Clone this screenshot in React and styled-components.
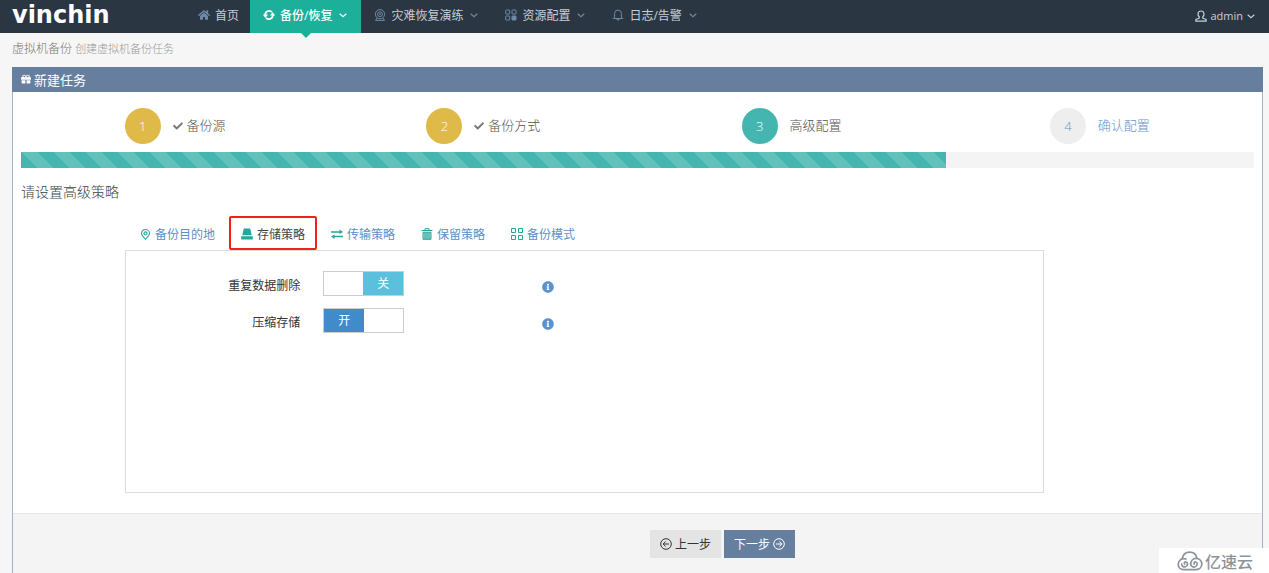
import React from "react";
import styled, { createGlobalStyle, css } from "styled-components";
import { FaHome, FaGift, FaCheck, FaInfoCircle } from "react-icons/fa";

const GlobalStyle = createGlobalStyle`
  * {
    box-sizing: border-box;
  }
  body {
    margin: 0;
    background: #f6f6f6;
    color: #333;
    font-family: "Open Sans", "Noto Sans CJK SC", sans-serif;
    font-size: 12px;
  }
  button {
    font: inherit;
    cursor: pointer;
  }
`;

const Page = styled.div`
  display: flex;
  flex-direction: column;
  min-height: 100vh;
`;

const TopBar = styled.header`
  display: flex;
  height: 33px;
  background: #2b3643;
`;

const Logo = styled.a`
  width: 185px;
  padding-left: 12px;
  color: #fff;
  font-family: "DejaVu Sans", sans-serif;
  font-size: 24px;
  font-weight: 700;
  line-height: 30px;
  text-decoration: none;
`;

const Nav = styled.nav`
  display: flex;
  flex: 1;
`;

const NavLink = styled.a`
  position: relative;
  display: flex;
  align-items: center;
  gap: 5px;
  height: 33px;
  padding: 0 ${(props) => (props.$menu ? "13px" : "11px")} 3px 13px;
  color: #c6cfda;
  text-decoration: none;
  white-space: nowrap;

  > svg {
    color: #7089a8;
  }
  > svg + svg,
  > span + svg {
    margin-left: 1px;
  }
  ${(props) =>
    props.$active &&
    css`
      background: #1caf9a;
      color: #fff;
      font-weight: 500;
      > svg {
        color: #fff;
      }
      &::after {
        content: "";
        position: absolute;
        left: 50%;
        bottom: -5px;
        margin-left: -6px;
        border: 6px solid transparent;
        border-top-color: #1caf9a;
        border-bottom: 0;
      }
    `}
`;

const UserMenu = styled.button`
  display: flex;
  align-items: center;
  gap: 3px;
  height: 33px;
  padding: 0 13px 2px;
  border: 0;
  background: none;
  color: #c6cfda;
  font-size: 11px;
`;

const PageTitle = styled.h1`
  margin: 0;
  padding: 6px 12px 8px;
  color: #777;
  font-size: 12px;
  font-weight: 300;
  line-height: 20px;

  small {
    color: #999;
    font-size: 11px;
  }
`;

const Portlet = styled.main`
  display: flex;
  flex: 1;
  flex-direction: column;
  margin: 0 6px 0 12px;
  border: 1px solid #a3b3ca;
  border-top: 0;
  border-bottom: 0;
  background: #fff;
`;

const PortletTitle = styled.h2`
  display: flex;
  align-items: center;
  gap: 3px;
  height: 25px;
  margin: 0 -1px;
  padding: 0 9px 1px;
  background: #677f9f;
  color: #fff;
  font-size: 13px;
  font-weight: 400;
`;

const Body = styled.div`
  padding: 16px 8px 20px;
`;

const Steps = styled.ol`
  display: flex;
  margin: 0;
  padding: 0;
  list-style: none;
`;

const Step = styled.li`
  display: flex;
  flex: 1;
  align-items: center;
  justify-content: center;
  gap: 12px;
  color: ${(props) => (props.$state === "todo" ? "#6a93c9" : "#555")};
  font-size: 13px;
  font-weight: 300;
`;

const stepColors = { done: "#dfba49", active: "#45b6af", todo: "#eee" };

const StepNumber = styled.span`
  width: 36px;
  height: 36px;
  border-radius: 50%;
  background: ${(props) => stepColors[props.$state]};
  color: ${(props) => (props.$state === "todo" ? "#6a93c9" : "#fff")};
  line-height: 36px;
  text-align: center;
`;

const StepLabel = styled.span`
  display: flex;
  align-items: center;
  gap: 4px;
  padding-bottom: 3px;

  svg {
    margin-top: 3px;
    color: #777;
  }
`;

const Progress = styled.div`
  height: 16px;
  margin-top: 8px;
  background: #f4f4f4;
`;

const ProgressBar = styled.div`
  height: 16px;
  background: #45b6af
    linear-gradient(
      45deg,
      rgba(255, 255, 255, 0.15) 25%,
      transparent 25%,
      transparent 50%,
      rgba(255, 255, 255, 0.15) 50%,
      rgba(255, 255, 255, 0.15) 75%,
      transparent 75%
    );
  background-size: 32px 32px;
`;

const SectionTitle = styled.h3`
  margin: 14px 0;
  color: #444;
  font-size: 14px;
  font-weight: 300;
  line-height: 20px;
`;

const Tabs = styled.div`
  display: flex;
  gap: 2px;
  width: 75%;
  margin-left: 104px;
  padding-left: 3px;
`;

const Tab = styled.button`
  display: flex;
  align-items: center;
  gap: 4px;
  height: 34px;
  padding: 2px 10px 0;
  border: 2px solid ${(props) => (props.$active ? "#f2201c" : "transparent")};
  border-radius: 2px;
  background: #fff;
  color: ${(props) => (props.$active ? "#444" : "#5b8fc7")};
  white-space: nowrap;

  svg {
    color: #26a69a;
  }
`;

const TabPanel = styled.section`
  width: 74.5%;
  min-height: 243px;
  margin-left: 104px;
  padding-top: 20px;
  border: 1px solid #ddd;
`;

const FormRow = styled.div`
  display: grid;
  grid-template-columns: 19% 196px auto;
  align-items: center;
  column-gap: 23px;
  height: 25px;
  margin-bottom: 12px;
`;

const FieldLabel = styled.label`
  padding-top: 3px;
  text-align: right;
`;

const Switch = styled.label`
  position: relative;
  display: flex;
  width: 81px;
  height: 25px;
  border: 1px solid #ccc;
  background: #fff;
  cursor: pointer;

  input {
    position: absolute;
    inset: 0;
    margin: 0;
    opacity: 0;
  }
  span {
    width: 40px;
    margin-left: ${(props) => (props.$on ? "0" : "auto")};
    background: ${(props) => (props.$on ? "#428bca" : "#5bc0de")};
    color: #fff;
    line-height: 23px;
    text-align: center;
  }
`;

const InfoButton = styled.button`
  display: flex;
  width: 12px;
  padding: 7px 0 0;
  border: 0;
  background: none;
  color: #5b93cc;
`;

const Actions = styled.footer`
  display: flex;
  flex: 1;
  align-items: flex-start;
  gap: 3px;
  padding: 16px 0 15px 51%;
  border-top: 1px solid #e5e5e5;
  background: #f4f4f4;
`;

const ActionButton = styled.button`
  display: flex;
  align-items: center;
  justify-content: center;
  gap: 3px;
  width: 71px;
  height: 28px;
  padding: 0;
  border: 0;
  background: ${(props) => (props.$primary ? "#677f9f" : "#e4e4e4")};
  color: ${(props) => (props.$primary ? "#fff" : "#333")};
  white-space: nowrap;
`;

const Watermark = styled.div`
  position: fixed;
  right: 0;
  bottom: 0;
  display: flex;
  align-items: center;
  gap: 2px;
  height: 25px;
  padding: 0 16px 0 18px;
  background: #fff;
  color: #8d939b;
  font-size: 16px;
  font-weight: 500;
`;

// Shared frame for the stroked icons
function Icon({ size = 12, width = 1, children }) {
  return (
    <svg
      width={size}
      height={size}
      viewBox="0 0 12 12"
      fill="none"
      stroke="currentColor"
      strokeWidth={width}
      aria-hidden="true"
    >
      {children}
    </svg>
  );
}

const RefreshIcon = () => (
  <Icon width={1.8}>
    <path d="M2.3 6.2A3.8 3.8 0 0 1 8.9 3.2M9.7 5.8A3.8 3.8 0 0 1 3.1 8.8" />
    <path
      d="M-.3 5.4h5.4L2.4 9zM6.900 6.600h5.400L9.600 3z"
      fill="currentColor"
      stroke="none"
    />
  </Icon>
);

const DrillIcon = () => (
  <Icon>
    <circle cx="6" cy="5.2" r="4.6" />
    <circle cx="6" cy="5.2" r="2.4" />
    <circle cx="6" cy="5.2" r=".6" />
    <path d="M3 9 1.6 11.4h8.8L9 9" />
  </Icon>
);

const ResourceIcon = () => (
  <Icon>
    <rect x=".7" y="1" width="4" height="4" rx=".5" />
    <rect x="7" y="1" width="4" height="4" rx=".5" />
    <rect x=".7" y="7" width="4" height="4" rx=".5" />
    <rect x="7" y="7" width="4" height="4" rx=".5" fill="currentColor" />
  </Icon>
);

const BellIcon = () => (
  <Icon>
    <path d="M1.2 9.5h9.6L9.4 8V4.5a3.4 3.4 0 0 0-6.8 0V8zM4.7 9.8a1.3 1.3 0 0 0 2.6 0" />
  </Icon>
);

const UserIcon = () => (
  <Icon width={1.2}>
    <path d="M4.3 7C2.2 5 2.6 1 6 1s3.8 4 1.7 6v1.2l3.4 1.2v1.7H.9V9.4l3.4-1.2z" />
  </Icon>
);

const ChevronIcon = () => (
  <Icon size={10} width={1.4}>
    <path d="m2 4.5 4 3.5 4-3.5" />
  </Icon>
);

const PinIcon = () => (
  <Icon size={11} width={1.2}>
    <path d="M6 11.2C4 8.6 1.6 6.8 1.6 4.8a4.4 4.2 0 0 1 8.8 0c0 2-2.4 3.8-4.400 6.400z" />
    <circle cx="6" cy="4.8" r="1.7" />
  </Icon>
);

const DiskIcon = () => (
  <Icon>
    <path
      d="M2.800.6h6.400L10.800 7.200H1.200zM.2 8.200h11.600v3.200H.2z"
      fill="currentColor"
      stroke="none"
    />
  </Icon>
);

const TransferIcon = () => (
  <Icon width={1.6}>
    <path d="M0 4h9M3 8.500h9" />
    <path
      d="M8.500 1.500 12 4 8.500 6zM3.500 6.500 0 8.500l3.500 2.500z"
      fill="currentColor"
      stroke="none"
    />
  </Icon>
);

const TrashIcon = () => (
  <Icon>
    <path d="M2 4.200h8v7.100H2z" fill="currentColor" fillOpacity=".4" />
    <path d="M.6 2.500h10.800M4 2.300V.7h4v1.600M4 4.500v6.500M6 4.500v6.500M8 4.500v6.500" />
  </Icon>
);

const ModeIcon = () => (
  <Icon>
    <path d="M.5.5h4v4h-4zM7.500.5h4v4h-4zM.5 7.500h4v4h-4zM7.500 7.500h4v4h-4z" />
  </Icon>
);

const PrevIcon = () => (
  <Icon>
    <circle cx="6" cy="6" r="5.3" />
    <path d="M9 6H3.200M5.600 3.500 3.200 6l2.400 2.500" />
  </Icon>
);

const NextIcon = () => (
  <Icon>
    <circle cx="6" cy="6" r="5.3" />
    <path d="M3 6h5.800M6.400 3.500 8.800 6 6.400 8.500" />
  </Icon>
);

const CloudIcon = () => (
  <svg
    width="26"
    height="20"
    viewBox="0 0 26 20"
    fill="none"
    stroke="currentColor"
    strokeWidth="1.7"
    strokeLinecap="round"
    aria-hidden="true"
  >
    <path d="M5.200 7.600C6 3.800 9 1.200 12.600 1.200c3.600 0 6.400 2 7.200 5.400" />
    <path d="M9 8C5 6.600 1.200 9.400 1.200 13.200c0 3 2.300 5.400 5.600 5.400h12.400c3.300 0 5.600-2.400 5.600-5.500 0-3.300-2.600-5.700-5.600-5.700-3.200 0-5.400 2.400-5.600 5.500" />
    <path d="M13.600 12.900c.2 2.600 2.600 3.600 4.600 2.900 2.400-.8 2.600-4.400.4-4.800-1.400-.2-2 1.200-1.400 2" />
    <path d="M7.600 13c-.8-1 0-2.200 1.200-2 2.400.4 2.200 4.200-.2 4.800-2 .5-3.800-.6-3.900-2.600" />
  </svg>
);

const navItems = [
  { label: "首页", icon: <FaHome size={12} /> },
  { label: "备份/恢复", icon: <RefreshIcon />, menu: true, active: true },
  { label: "灾难恢复演练", icon: <DrillIcon />, menu: true },
  { label: "资源配置", icon: <ResourceIcon />, menu: true },
  { label: "日志/告警", icon: <BellIcon />, menu: true },
];

const steps = [
  { label: "备份源", state: "done" },
  { label: "备份方式", state: "done" },
  { label: "高级配置", state: "active" },
  { label: "确认配置", state: "todo" },
];

const tabs = [
  { label: "备份目的地", icon: <PinIcon /> },
  { label: "存储策略", icon: <DiskIcon /> },
  { label: "传输策略", icon: <TransferIcon /> },
  { label: "保留策略", icon: <TrashIcon /> },
  { label: "备份模式", icon: <ModeIcon /> },
];

function SwitchRow({ id, label, defaultOn }) {
  const [on, setOn] = React.useState(defaultOn);
  return (
    <FormRow>
      <FieldLabel htmlFor={id}>{label}</FieldLabel>
      <Switch $on={on}>
        <input
          id={id}
          type="checkbox"
          checked={on}
          onChange={(e) => setOn(e.target.checked)}
        />
        <span>{on ? "开" : "关"}</span>
      </Switch>
      <InfoButton type="button" aria-label={label}>
        <FaInfoCircle size={12} />
      </InfoButton>
    </FormRow>
  );
}

export default function App() {
  const [tab, setTab] = React.useState(1);

  return (
    <Page>
      <GlobalStyle />
      <TopBar>
        <Logo href="#">vinchin</Logo>
        <Nav>
          {navItems.map((item) => (
            <NavLink
              key={item.label}
              href="#"
              $active={item.active}
              $menu={item.menu}
            >
              {item.icon}
              <span>{item.label}</span>
              {item.menu && <ChevronIcon />}
            </NavLink>
          ))}
        </Nav>
        <UserMenu type="button">
          <UserIcon />
          admin
          <ChevronIcon />
        </UserMenu>
      </TopBar>

      <PageTitle>
        虚拟机备份 <small>创建虚拟机备份任务</small>
      </PageTitle>

      <Portlet>
        <PortletTitle>
          <FaGift size={10} />
          新建任务
        </PortletTitle>
        <Body>
          <Steps>
            {steps.map((step, i) => (
              <Step key={step.label} $state={step.state}>
                <StepNumber $state={step.state}>{i + 1}</StepNumber>
                <StepLabel>
                  {step.state === "done" && <FaCheck size={10} />}
                  {step.label}
                </StepLabel>
              </Step>
            ))}
          </Steps>
          <Progress>
            <ProgressBar style={{ width: `${(3 / steps.length) * 100}%` }} />
          </Progress>
          <SectionTitle>请设置高级策略</SectionTitle>

          <Tabs role="tablist">
            {tabs.map((item, i) => (
              <Tab
                key={item.label}
                type="button"
                role="tab"
                aria-selected={tab === i}
                $active={tab === i}
                onClick={() => setTab(i)}
              >
                {item.icon}
                {item.label}
              </Tab>
            ))}
          </Tabs>
          <TabPanel role="tabpanel">
            <SwitchRow id="dedup" label="重复数据删除" defaultOn={false} />
            <SwitchRow id="compress" label="压缩存储" defaultOn={true} />
          </TabPanel>
        </Body>
        <Actions>
          <ActionButton type="button">
            <PrevIcon />
            上一步
          </ActionButton>
          <ActionButton type="button" $primary>
            下一步
            <NextIcon />
          </ActionButton>
        </Actions>
      </Portlet>

      <Watermark>
        <CloudIcon />
        亿速云
      </Watermark>
    </Page>
  );
}
